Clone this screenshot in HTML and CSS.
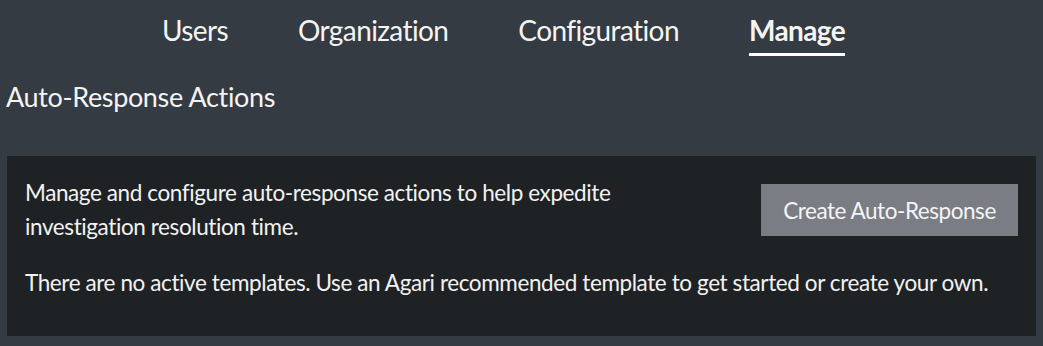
FILE: index.html
```html
<!DOCTYPE html>
<html lang="en">
<head>
<meta charset="utf-8">
<title>Auto-Response Actions</title>
<link rel="stylesheet" href="styles.css">
</head>
<body>
<nav class="tabs">
  <a class="tab">Users</a>
  <a class="tab">Organization</a>
  <a class="tab">Configuration</a>
  <a class="tab tab-active">Manage</a>
</nav>
<h1 class="page-title">Auto-Response Actions</h1>
<section class="panel">
  <div class="panel-row">
    <p class="panel-desc">Manage and configure auto-response actions to help expedite<br>investigation resolution time.</p>
    <button class="btn">Create Auto-Response</button>
  </div>
  <p class="panel-note">There are no active templates. Use an Agari recommended template to get started or create your own.</p>
</section>
</body>
</html>
```

FILE: styles.css
```css
html, body {
  margin: 0;
  padding: 0;
  background: #353b42;
  height: 100%;
}
body {
  font-family: "Lato", "Liberation Sans", sans-serif;
  color: #f2f2f2;
  overflow: hidden;
}
.tabs {
  display: flex;
  gap: 70px;
  padding: 10px 0 0 162px;
  height: 50px;
  box-sizing: content-box;
}
.tab {
  font-size: 28px;
  letter-spacing: -0.6px;
  color: #f4f4f4;
  line-height: 40px;
  height: 43px;
  border-bottom: 3px solid transparent;
  text-decoration: none;
}
.tab-active {
  font-weight: 700;
  border-bottom-color: #ffffff;
}
.page-title {
  margin: 17px 0 0 6px;
  font-size: 27px;
  letter-spacing: -0.35px;
  font-weight: 400;
  line-height: 40px;
  color: #f4f4f4;
}
.panel {
  margin: 39px 7px 0 7px;
  background: #1f2225;
  height: 180px;
  padding: 20px 18px 0 18px;
  box-sizing: border-box;
}
.panel-row {
  display: flex;
  justify-content: space-between;
  align-items: flex-start;
}
.panel-desc {
  margin: 0;
  font-size: 22.5px;
  letter-spacing: -0.4px;
  line-height: 34px;
}
.btn {
  margin-top: 8px;
  width: 257px;
  height: 52px;
  background: #7a7d84;
  border: 0;
  color: #f4f4f4;
  font-family: inherit;
  font-size: 22.5px;
  letter-spacing: -0.45px;
  padding: 0;
}
.panel-note {
  margin: 22px 0 0 0;
  font-size: 22.5px;
  letter-spacing: -0.4px;
  line-height: 33px;
}
```
